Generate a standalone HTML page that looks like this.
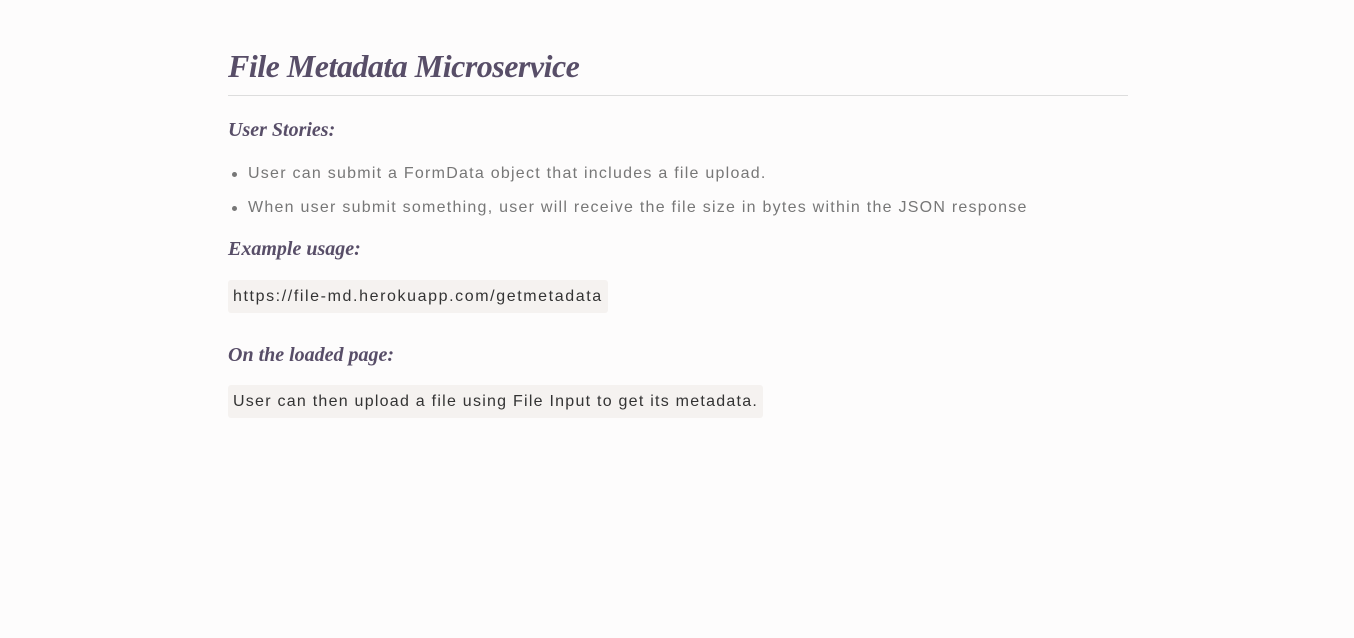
<!DOCTYPE html>
<html><head><meta charset="utf-8"><style>
body{margin:0;background:#fdfcfc;width:1354px;height:638px;overflow:hidden;font-family:"Liberation Sans",sans-serif;}
.c{position:absolute;left:228px;width:900px;top:0}
h1,h3{font-family:"Liberation Serif",serif;font-style:italic;font-weight:bold;color:#584e68;margin:0;position:absolute;white-space:nowrap}
h1{font-size:32px;top:48px;letter-spacing:-0.5px}
.hr{position:absolute;top:95px;left:0;width:900px;height:1px;background:#ddd}
h3{font-size:20px}
li{position:absolute;left:20px;color:#777;font-size:16px;letter-spacing:1.25px;white-space:nowrap;line-height:20px}
li:before{content:"";position:absolute;left:-16px;top:8px;width:5px;height:5px;border-radius:50%;background:#777}
.code{position:absolute;left:0;background:#f5f2f0;color:#333;font-size:16px;letter-spacing:1.25px;padding:0 5px;height:33px;line-height:33px;border-radius:3px;white-space:nowrap}
</style></head><body><div class="c">
<h1>File Metadata Microservice</h1>
<div class="hr"></div>
<h3 style="top:119px">User Stories:</h3>
<ul style="margin:0;padding:0;list-style:none">
<li style="top:164px">User can submit a FormData object that includes a file upload.</li>
<li style="top:198px">When user submit something, user will receive the file size in bytes within the JSON response</li>
</ul>
<h3 style="top:238px">Example usage:</h3>
<div class="code" style="top:280px;letter-spacing:1.6px">https://file-md.herokuapp.com/getmetadata</div>
<h3 style="top:344px">On the loaded page:</h3>
<div class="code" style="top:385px">User can then upload a file using File Input to get its metadata.</div>
</div></body></html>
